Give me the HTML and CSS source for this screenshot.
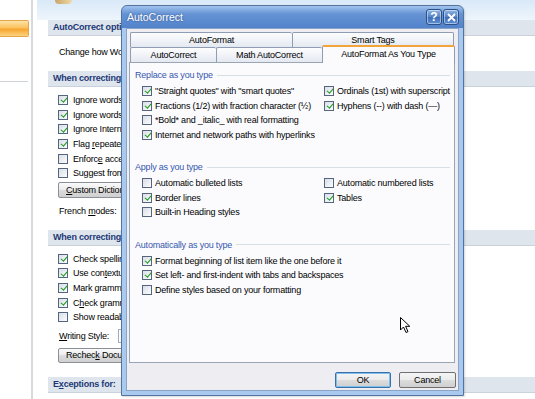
FILE: index.html
```
<!DOCTYPE html>
<html lang="en">
<head>
    <meta charset="UTF-8">
    <meta name="viewport" content="width=device-width, initial-scale=1.0">
    <title>Word Options - Proofing</title>
    <link rel="stylesheet" href="styles.css">
</head>
<body>
    <div class="page">
        <aside class="sidebar">
            <div class="side-active"></div>
            <div class="side-rule"></div>
        </aside>

        <main class="options">
            <div class="ribbon"><span class="ribbon-icon"></span></div>

            <h3 class="opt-head">AutoCorrect options</h3>
            <div class="opt-body opt-first">
                <p class="opt-line">Change how Word corrects and formats text as you type:</p>
            </div>

            <h3 class="opt-head">When correcting spelling in Microsoft Office programs</h3>
            <div class="opt-body">
                <label class="opt-check"><span class="cb checked"></span><span>Ignore words in <u>U</u>PPERCASE</span></label>
                <label class="opt-check"><span class="cb checked"></span><span>Ignore words that contain num<u>b</u>ers</span></label>
                <label class="opt-check"><span class="cb checked"></span><span>Ignore Internet and <u>f</u>ile addresses</span></label>
                <label class="opt-check"><span class="cb checked"></span><span>Flag <u>r</u>epeated words</span></label>
                <label class="opt-check"><span class="cb"></span><span>Enforc<u>e</u> accented uppercase in French</span></label>
                <label class="opt-check"><span class="cb"></span><span>Suggest from main dictionary only</span></label>
                <button class="page-btn"><u>C</u>ustom Dictionaries...</button>
                <p class="opt-line opt-french">French <u>m</u>odes:</p>
            </div>

            <h3 class="opt-head">When correcting spelling and grammar in Word</h3>
            <div class="opt-body opt-last">
                <label class="opt-check"><span class="cb checked"></span><span>Check spelling as you type</span></label>
                <label class="opt-check"><span class="cb checked"></span><span>Use con<u>t</u>extual spelling</span></label>
                <label class="opt-check"><span class="cb checked"></span><span>Mark grammar errors as you type</span></label>
                <label class="opt-check"><span class="cb checked"></span><span>C<u>h</u>eck grammar with spelling</span></label>
                <label class="opt-check"><span class="cb"></span><span>Show readability statistics</span></label>
                <div class="writing-row">
                    <span><u>W</u>riting Style:</span>
                    <span class="fake-select"></span>
                </div>
                <button class="page-btn page-btn-short">Rechec<u>k</u> Document</button>
            </div>

            <h3 class="opt-head">E<u>x</u>ceptions for:</h3>
        </main>
    </div>

    <div class="dialog">
        <div class="dlg-title">
            <span class="dlg-caption">AutoCorrect</span>
            <div class="dlg-controls">
                <span class="ctl">?</span>
                <span class="ctl">
                    <svg width="9" height="9" viewBox="0 0 9 9"><path d="M1 1 L8 8 M8 1 L1 8" stroke="#fff" stroke-width="1.8" fill="none"/></svg>
                </span>
            </div>
        </div>

        <div class="dlg-body">
            <div class="tab-row">
                <div class="tab tab-half">AutoFormat</div>
                <div class="tab tab-half">Smart Tags</div>
            </div>
            <div class="tab-row">
                <div class="tab tab-ac">AutoCorrect</div>
                <div class="tab tab-math">Math AutoCorrect</div>
                <div class="tab tab-active">AutoFormat As You Type</div>
            </div>

            <div class="tab-panel">
                <div class="group-head"><span>Replace as you type</span></div>
                <div class="group">
                    <div class="group-col">
                        <label class="chk"><span class="cb checked"></span><span>"Straight quotes" with "smart quotes"</span></label>
                        <label class="chk"><span class="cb checked"></span><span>Fractions (1/2) with fraction character (½)</span></label>
                        <label class="chk"><span class="cb"></span><span>*Bold* and _italic_ with real formatting</span></label>
                        <label class="chk"><span class="cb checked"></span><span>Internet and network paths with hyperlinks</span></label>
                    </div>
                    <div class="group-col">
                        <label class="chk"><span class="cb checked"></span><span>Ordinals (1st) with superscript</span></label>
                        <label class="chk"><span class="cb checked"></span><span>Hyphens (--) with dash (—)</span></label>
                    </div>
                </div>

                <div class="group-head"><span>Apply as you type</span></div>
                <div class="group">
                    <div class="group-col">
                        <label class="chk"><span class="cb"></span><span>Automatic bulleted lists</span></label>
                        <label class="chk"><span class="cb checked"></span><span>Border lines</span></label>
                        <label class="chk"><span class="cb"></span><span>Built-in Heading styles</span></label>
                    </div>
                    <div class="group-col">
                        <label class="chk"><span class="cb"></span><span>Automatic numbered lists</span></label>
                        <label class="chk"><span class="cb checked"></span><span>Tables</span></label>
                    </div>
                </div>

                <div class="group-head"><span>Automatically as you type</span></div>
                <div class="group">
                    <div class="group-col">
                        <label class="chk"><span class="cb checked"></span><span>Format beginning of list item like the one before it</span></label>
                        <label class="chk"><span class="cb checked"></span><span>Set left- and first-indent with tabs and backspaces</span></label>
                        <label class="chk"><span class="cb"></span><span>Define styles based on your formatting</span></label>
                    </div>
                </div>
            </div>

            <div class="dlg-buttons">
                <button class="btn btn-default">OK</button>
                <button class="btn">Cancel</button>
            </div>
        </div>
    </div>

    <svg class="cursor" width="12" height="18" viewBox="0 0 12 18">
        <path d="M0.5 0.5 L0.5 13 L3.5 10 L6 15.5 L8 14.6 L5.6 9.3 L9.8 9.3 Z" fill="#fff" stroke="#000" stroke-width="1" stroke-linejoin="round"/>
    </svg>
</body>
</html>
```

FILE: styles.css
```
* {
    margin: 0;
    padding: 0;
    box-sizing: border-box;
}

body {
    width: 535px;
    height: 399px;
    overflow: hidden;
    background: #fff;
    font-family: "Liberation Sans", Arial, sans-serif;
    font-size: 9px;
    letter-spacing: -0.2px;
    color: #000;
    position: relative;
}

button {
    font-family: inherit;
    font-size: inherit;
    letter-spacing: inherit;
    color: inherit;
}

/* background page: Word Options */

.page {
    display: flex;
    height: 399px;
}

.sidebar {
    width: 33px;
    flex: none;
    border-right: 2px solid #d6d9de;
    padding-top: 20px;
}

.side-active {
    height: 17px;
    width: 29px;
    border: 1px solid #e5a446;
    border-left: none;
    border-radius: 0 2px 2px 0;
    background: linear-gradient(#fde3a8, #fbc25e 45%, #f7a52e 55%, #fcd37f);
}

.side-rule {
    margin-top: 44px;
    width: 28px;
    height: 1px;
    background: #cfd3d9;
}

.options {
    flex: 1;
    min-width: 0;
    margin-left: 4px;
}

.ribbon {
    height: 20px;
    background: linear-gradient(#d9e9f8, #eef5fc);
    padding-left: 18px;
}

.ribbon-icon {
    display: block;
    width: 17px;
    height: 4px;
    border-radius: 0 0 4px 4px;
    background: linear-gradient(90deg, #c9a46a, #f1d9a4);
}

.opt-head {
    margin-left: 11px;
    height: 16px;
    line-height: 15px;
    padding-left: 5px;
    background: #dfe5ec;
    border-bottom: 1px solid #c9d1da;
    color: #1c3877;
    font-size: 9px;
    font-weight: bold;
    white-space: nowrap;
}

.opt-body {
    margin-left: 11px;
    padding: 6px 0 12px 10px;
}

.opt-first {
    padding-top: 9px;
}

.opt-last {
    padding-bottom: 14px;
}

.opt-line {
    height: 14px;
    line-height: 14px;
    padding-left: 1px;
    white-space: nowrap;
}

.opt-check {
    display: flex;
    align-items: center;
    gap: 5px;
    height: 14.6px;
    white-space: nowrap;
}

.page-btn {
    display: block;
    margin-top: 1px;
    height: 16px;
    width: 112px;
    text-align: left;
    padding-left: 7px;
    border: 1px solid #8a8f98;
    border-radius: 2px;
    background: linear-gradient(#fafafa, #ebebeb 50%, #dcdcdc 50%, #d0d0d0);
    white-space: nowrap;
}

.page-btn-short {
    margin-top: 5px;
    height: 15px;
}

.opt-french {
    margin-top: 6px;
}

.writing-row {
    margin-top: 4px;
    height: 14px;
    display: flex;
    align-items: center;
    gap: 9px;
    padding-left: 1px;
    white-space: nowrap;
}

.fake-select {
    flex: none;
    height: 14px;
    width: 100px;
    border: 1px solid #a5acb5;
    background: #fff;
}

/* checkbox shared by page and dialog */

.cb {
    position: relative;
    flex: none;
    width: 10px;
    height: 10px;
    border: 1px solid #55657f;
    background: linear-gradient(135deg, #d9dee6, #fbfcfd);
}

.cb.checked::after {
    content: '';
    position: absolute;
    left: 2.6px;
    top: 0.2px;
    width: 2.6px;
    height: 5.2px;
    border: solid #1e9b1e;
    border-width: 0 1.7px 1.7px 0;
    transform: rotate(40deg);
}

/* AutoCorrect dialog, floating over the page */

.dialog {
    position: absolute;
    left: 121px;
    top: 5px;
    width: 343px;
    height: 391px;
    display: flex;
    flex-direction: column;
    padding: 0 4px 4px;
    border: 1px solid #52749f;
    border-radius: 6px 6px 0 0;
    background: linear-gradient(#a2c3ee, #6593d4 8px, #5283cb 22px, #a9c9ef 22px);
    box-shadow: 1px 1px 2px rgba(0, 0, 0, 0.15);
}

.dlg-title {
    height: 22px;
    flex: none;
    display: flex;
    align-items: center;
    justify-content: space-between;
}

.dlg-caption {
    padding-left: 1px;
    color: #fff;
    font-size: 10.5px;
    letter-spacing: 0;
    text-shadow: 0 0 2px rgba(20, 40, 90, 0.6);
}

.dlg-controls {
    display: flex;
    gap: 1px;
}

.ctl {
    width: 16px;
    height: 16px;
    display: flex;
    align-items: center;
    justify-content: center;
    border: 1px solid #2c5088;
    border-radius: 3px;
    background: linear-gradient(#8fb4e4, #5583c8 50%, #3f6db6 50%, #5e8fd2);
    box-shadow: inset 0 0 0 1px rgba(255, 255, 255, 0.45);
    color: #fff;
    font-size: 12px;
    font-weight: bold;
    letter-spacing: 0;
}

.dlg-body {
    flex: 1;
    display: flex;
    flex-direction: column;
    border: 1px solid #8aa4c6;
    background: #eeeef2;
    padding: 3px 3px 0 2px;
}

.tab-row {
    display: flex;
    margin-left: 1px;
    height: 15px;
    align-items: flex-end;
}

.tab {
    height: 15px;
    line-height: 14px;
    text-align: center;
    border: 1px solid #8e9db4;
    border-bottom: none;
    border-right: none;
    border-radius: 2px 2px 0 0;
    background: linear-gradient(#fdfdfe, #e4e9f1);
    white-space: nowrap;
}

.tab-half {
    width: 162px;
}

.tab-half:last-child {
    border-right: 1px solid #8e9db4;
}

.tab-ac {
    width: 86px;
}

.tab-math {
    width: 106px;
}

.tab-active {
    position: relative;
    z-index: 1;
    width: 133px;
    height: 18px;
    margin-bottom: -1px;
    line-height: 14px;
    border-right: 1px solid #8e9db4;
    border-top: 2px solid #f1a43c;
    background: #fbfbfe;
}

.tab-panel {
    height: 301px;
    flex: none;
    border: 1px solid #9aa6b6;
    background: #fbfbfe;
    padding: 5px 0 0 5px;
}

.group-head {
    display: flex;
    align-items: center;
    height: 14px;
    color: #3658ad;
}

.group-head::after {
    content: '';
    flex: 1;
    height: 1px;
    margin: 0 4px 0 4px;
    background: #d9dee6;
}

.group {
    display: flex;
    margin: 2px 0 18px 7px;
}

.group:last-child {
    margin-bottom: 0;
}

.group-col {
    flex: none;
    width: 182px;
}

.group-col + .group-col {
    flex: 1;
    width: auto;
    min-width: 0;
}

.chk {
    display: flex;
    align-items: center;
    gap: 3px;
    height: 14.5px;
    white-space: nowrap;
}

.dlg-buttons {
    display: flex;
    justify-content: flex-end;
    gap: 8px;
    margin: 9px -1px 0 0;
}

.btn {
    width: 57px;
    height: 16px;
    border: 1px solid #707070;
    border-radius: 2px;
    background: linear-gradient(#f4f4f4, #ebebeb 50%, #dddddd 50%, #cfcfcf);
}

.btn-default {
    width: 56px;
    border-color: #3c6ea8;
    box-shadow: inset 0 0 0 1px #7cc0ee;
}

.cursor {
    position: absolute;
    left: 400px;
    top: 317px;
}
```
